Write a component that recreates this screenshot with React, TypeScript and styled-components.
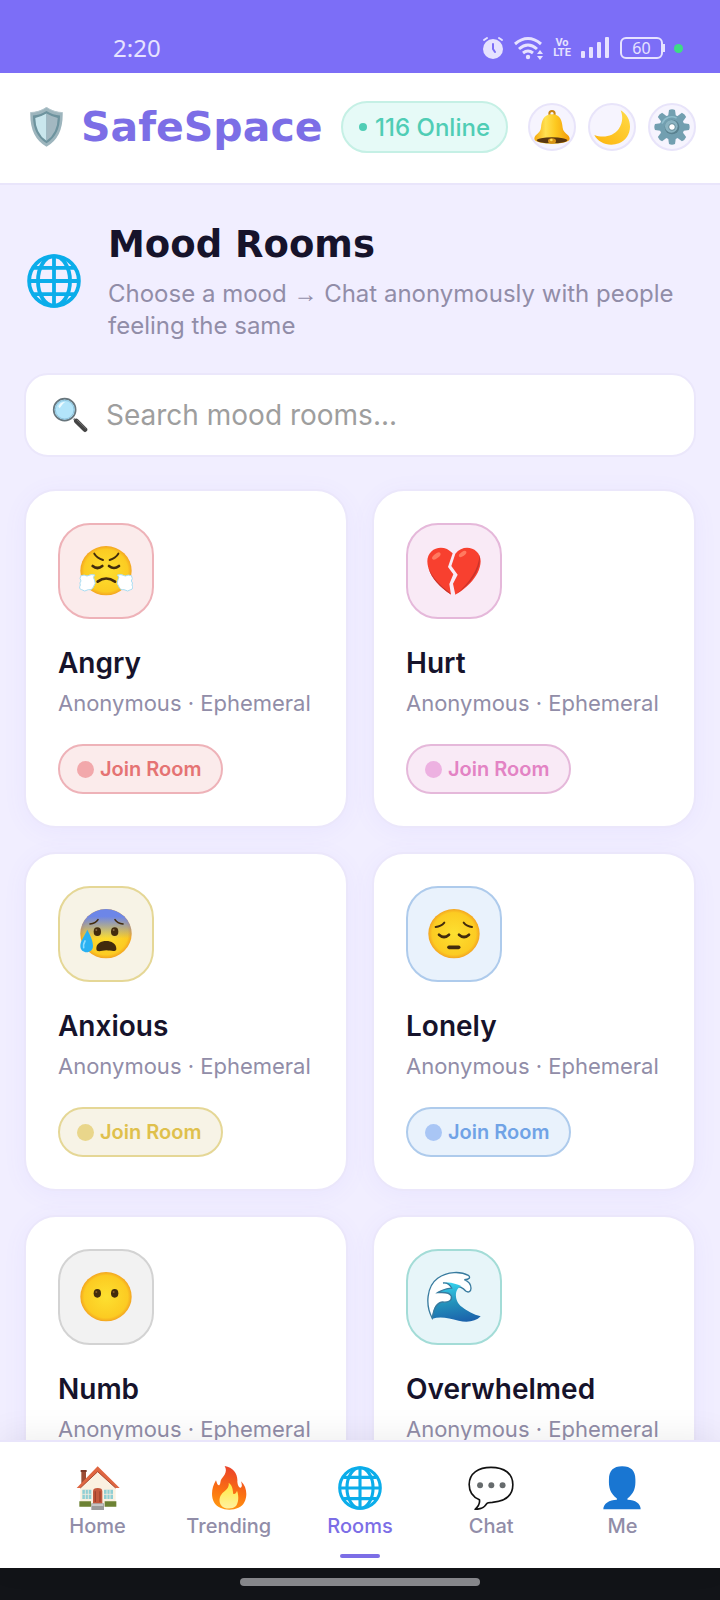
import React from "react";
import styled, { createGlobalStyle } from "styled-components";

const GlobalStyle = createGlobalStyle`
  * { box-sizing: border-box; }
  body { margin: 0; background: #f1eeff; font-family: Inter, "Noto Sans", sans-serif; color: #16132b; }
  h1, h2, p, ul { margin: 0; padding: 0; }
  button { font-family: inherit; cursor: pointer; }
`;

const Screen = styled.div`
  display: flex;
  flex-direction: column;
  height: 100vh;
  background: #f1eeff;
`;

const StatusBar = styled.div`
  display: flex;
  flex: none;
  align-items: flex-end;
  justify-content: space-between;
  height: 73px;
  padding: 0 37px 8px 113px;
  background: #7c6ef7;
  color: #e6e2ff;
`;

const Clock = styled.time`
  font: 400 24px/34px "Noto Sans", sans-serif;
`;

const StatusIcons = styled.div`
  display: flex;
  align-items: center;
  height: 34px;
`;

const SignalGroup = styled.span`
  display: flex;
  align-items: center;
  gap: 10px;
`;

const VoLte = styled.span`
  display: flex;
  flex-direction: column;
  align-items: center;
  width: 16px;
  margin: 0 11px 0 10px;
  font: 700 11px/10px Roboto, sans-serif;
`;

const Battery = styled.span`
  display: flex;
  align-items: center;
  justify-content: center;
  width: 43px;
  height: 22px;
  margin-left: 10px;
  border: 2px solid currentColor;
  border-radius: 6px;
  font: 400 16px/18px "Noto Sans", sans-serif;
`;

const BatteryTip = styled.span`
  width: 2px;
  height: 8px;
  background: currentColor;
`;

const ActiveDot = styled.span`
  width: 9px;
  height: 9px;
  margin-left: 9px;
  border-radius: 50%;
  background: #3ddc84;
`;

const Header = styled.header`
  display: flex;
  flex: none;
  align-items: center;
  height: 112px;
  padding: 0 24px 2px 30px;
  background: #fff;
  border-bottom: 2px solid #e9e5fb;
`;

const Brand = styled.div`
  display: flex;
  flex: 1;
  align-items: center;
  gap: 18px;
  font: 700 41px/48px "DejaVu Sans", sans-serif;
  color: #7c6ee6;
`;

const OnlinePill = styled.div`
  display: flex;
  align-items: center;
  gap: 8px;
  height: 52px;
  padding: 0 16px;
  border: 2px solid #c5f0e5;
  border-radius: 26px;
  background: #e6faf7;
  color: #4fcdb5;
  font-size: 24px;
  font-weight: 500;
`;

const OnlineDot = styled.span`
  width: 8px;
  height: 8px;
  border-radius: 50%;
  background: currentColor;
`;

const HeaderActions = styled.div`
  display: flex;
  gap: 12px;
  margin-left: 20px;
`;

const RoundButton = styled.button`
  display: flex;
  align-items: center;
  justify-content: center;
  width: 48px;
  height: 48px;
  padding: 0;
  border: 2px solid #e8e4fa;
  border-radius: 50%;
  background: #f6f4fe;
`;

const Content = styled.main`
  flex: 1;
  min-height: 0;
  overflow-y: auto;
  scrollbar-width: none;
  padding: 38px 24px 32px;
`;

const Intro = styled.section`
  display: flex;
  align-items: center;
  gap: 24px;
`;

const IntroIcon = styled.div`
  display: flex;
  flex: none;
  width: 60px;
  padding: 0 0 4px 3px;
`;

const PageTitle = styled.h1`
  font: 700 37px/44px "DejaVu Sans", sans-serif;
`;

const Subtitle = styled.p`
  margin-top: 11px;
  font-size: 24px;
  line-height: 32px;
  color: #918da8;
`;

const Arrow = styled.span`
  font-family: "Liberation Sans", sans-serif;
`;

const SearchBox = styled.label`
  display: flex;
  align-items: center;
  gap: 18px;
  height: 84px;
  margin: 31px 0 32px;
  padding: 0 26px;
  border: 2px solid #ebe7fb;
  border-radius: 24px;
  background: #fff;
`;

const SearchInput = styled.input`
  flex: 1;
  min-width: 0;
  padding: 0;
  border: 0;
  outline: 0;
  background: transparent;
  font: 400 28px/36px Inter, sans-serif;
  color: #16132b;
  &::placeholder { color: #9e9e9e; opacity: 1; }
`;

const RoomGrid = styled.div`
  display: grid;
  grid-template-columns: 1fr 1fr;
  gap: 24px;
`;

const Card = styled.article`
  display: flex;
  flex-direction: column;
  align-items: flex-start;
  padding: 32px;
  border: 2px solid #ebe7fb;
  border-radius: 32px;
  background: #fff;
  box-shadow: 0 4px 24px rgba(124, 110, 247, 0.06);
`;

const Tile = styled.div<{ $fill: string; $line: string }>`
  display: flex;
  align-items: center;
  justify-content: center;
  width: 96px;
  height: 96px;
  border: 2px solid ${(p) => p.$line};
  border-radius: 32px;
  background: ${(p) => p.$fill};
`;

const RoomName = styled.h2`
  margin-top: 24px;
  font-size: 28px;
  font-weight: 600;
  line-height: 40px;
`;

const RoomMeta = styled.p`
  margin-top: 6px;
  font-size: 22px;
  line-height: 28px;
  white-space: nowrap;
  color: #918da8;
`;

const JoinButton = styled.button<{ $fill: string; $line: string; $ink: string }>`
  display: flex;
  align-items: center;
  gap: 6px;
  height: 50px;
  margin-top: 27px;
  padding: 0 20px 0 17px;
  border: 2px solid ${(p) => p.$line};
  border-radius: 25px;
  background: ${(p) => p.$fill};
  color: ${(p) => p.$ink};
  font-size: 20px;
  font-weight: 600;
`;

const JoinDot = styled.span<{ $color: string }>`
  width: 17px;
  height: 17px;
  border-radius: 50%;
  background: ${(p) => p.$color};
`;

const NavBar = styled.nav`
  position: relative;
  display: flex;
  flex: none;
  height: 128px;
  padding: 0 32px;
  border-top: 2px solid #e9e5fb;
  background: #fff;
  box-shadow: 0 -4px 32px rgba(0, 0, 0, 0.07);
`;

const NavLink = styled.a<{ $active?: boolean }>`
  display: flex;
  flex: 1;
  flex-direction: column;
  align-items: center;
  padding-top: 24px;
  color: ${(p) => (p.$active ? "#7c6ee6" : "#918da8")};
  font-size: 20px;
  font-weight: 500;
  line-height: 28px;
  text-decoration: none;
  &::after {
    content: "";
    width: 40px;
    height: 4px;
    margin-top: 14px;
    border-radius: 2px;
    background: ${(p) => (p.$active ? "#7c6ee6" : "transparent")};
  }
`;

const NavIcon = styled.span`
  display: flex;
  height: 44px;
  margin-bottom: 2px;
`;

const GestureBar = styled.div`
  display: flex;
  flex: none;
  justify-content: center;
  height: 32px;
  padding-top: 10px;
  background: #121418;
`;

const GestureHandle = styled.div`
  width: 240px;
  height: 8px;
  border-radius: 4px;
  background: #87888c;
`;

/* ---------- drawings ---------- */

const Shield = () => (
  <svg width="33" height="40" viewBox="90 320 98 121" aria-hidden="true">
    <path d="M139 321 Q160 336 188 337 Q190 412 139 440 Q88 412 90 337 Q118 336 139 321Z" fill="#9db5bd" />
    <path d="M139 332 Q158 344 180 346 Q180 405 139 430 Q98 405 98 346 Q120 344 139 332Z" fill="#6d939e" />
    <path d="M139 340 Q120 351 105 353 Q106 400 139 422Z" fill="#c9e6ed" />
    <path d="M139 340 Q158 351 173 353 Q172 400 139 422Z" fill="#a3b8c1" />
    <path d="M90 337 Q118 336 139 321 Q160 336 188 337" fill="none" stroke="#b4c6cc" strokeWidth="3" />
  </svg>
);

const Bell = () => (
  <svg width="36" height="36" viewBox="583 328 108 108" aria-hidden="true">
    <defs>
      <linearGradient id="bell" x1="0" x2="1">
        <stop offset="0" stopColor="#f5a80f" />
        <stop offset=".32" stopColor="#ffe152" />
        <stop offset=".6" stopColor="#fdc920" />
        <stop offset="1" stopColor="#f39a0a" />
      </linearGradient>
    </defs>
    <circle cx="637" cy="342" r="8" fill="none" stroke="#c98412" strokeWidth="6" />
    <path d="M637 344 C663 344 667 364 669 384 C671 402 689 402 690 417 C690 437 584 437 584 417 C585 402 602 402 604 384 C606 364 611 344 637 344Z" fill="url(#bell)" />
    <ellipse cx="637" cy="422" rx="46" ry="9" fill="#5a3710" />
    <ellipse cx="637" cy="424" rx="12" ry="8" fill="#d89215" />
    <circle cx="635" cy="421" r="4" fill="#ffe05c" />
  </svg>
);

const Moon = () => (
  <svg width="36" height="36" viewBox="761 328 108 108" aria-hidden="true">
    <defs>
      <linearGradient id="moon" x1="1" y1="0" x2=".2" y2="1">
        <stop offset="0" stopColor="#ffdb48" />
        <stop offset="1" stopColor="#fdb813" />
      </linearGradient>
    </defs>
    <path d="M841 332 C882 356 876 416 836 431 C806 442 774 430 762 406 C788 416 820 410 835 388 C848 369 848 350 841 332Z" fill="url(#moon)" />
  </svg>
);

const Gear = () => (
  <svg width="36" height="36" viewBox="-54 -54 108 108" aria-hidden="true">
    {[0, 45, 90, 135, 180, 225, 270, 315].map((a) => (
      <path key={a} d="M-9 -51 Q0 -55 9 -51 L12 -30 L-12 -30Z" fill="#729fb0" transform={`rotate(${a})`} />
    ))}
    <circle r="37" fill="#729fb0" />
    <path d="M-29 -12 A31 31 0 0 1 12 -28" fill="none" stroke="#8ebccb" strokeWidth="5" strokeLinecap="round" />
    <circle r="22" fill="#59818f" />
    <circle r="19" cx="-2" cy="-2" fill="#8ab3c1" />
    <circle r="10" fill="#fff" stroke="#5f8997" strokeWidth="3" />
  </svg>
);

const Globe = ({ size }: { size: number }) => (
  <svg width={size} height={size} viewBox="0 0 128 128" aria-hidden="true">
    <g fill="none" stroke="#0badea" strokeWidth="9">
      <circle cx="64" cy="64" r="59" />
      <ellipse cx="64" cy="64" rx="38" ry="59" />
      <path d="M64 5V123M5 64H123M16 33H112M16 95H112" />
    </g>
  </svg>
);

const Magnifier = () => (
  <svg width="36" height="36" viewBox="157 594 108 108" aria-hidden="true">
    <path d="M222 659 L233 669" stroke="#9aa0a4" strokeWidth="7" />
    <path d="M230 666 L256 692" stroke="#454545" strokeWidth="14" strokeLinecap="round" />
    <path d="M233 664 L258 688" stroke="#707070" strokeWidth="3" strokeLinecap="round" />
    <circle cx="195" cy="632" r="33" fill="#b3e5fa" stroke="#67757c" strokeWidth="5" />
    <circle cx="195" cy="632" r="28" fill="none" stroke="#8fc4dc" strokeWidth="3" />
    <path d="M176 622 Q183 608 196 609 Q188 614 180 628Z" fill="#eefbff" />
  </svg>
);

const FaceBase = ({ id, top, children }: { id: string; top?: string; children: React.ReactNode }) => (
  <svg width="54" height="54" viewBox="-6 -6 162 162" aria-hidden="true">
    <defs>
      <radialGradient id={id} cx=".5" cy=".5" r=".52">
        <stop offset="0" stopColor="#fde030" />
        <stop offset=".82" stopColor="#fccb22" />
        <stop offset="1" stopColor="#f19a20" />
      </radialGradient>
      <linearGradient id={id + "-top"} x1="0" y1="0" x2="0" y2="1">
        <stop offset="0" stopColor={top} />
        <stop offset=".15" stopColor={top} />
        <stop offset=".6" stopColor={top} stopOpacity="0" />
      </linearGradient>
    </defs>
    <ellipse cx="75" cy="74" rx="77" ry="74" fill={`url(#${id})`} />
    {top && <ellipse cx="75" cy="74" rx="77" ry="74" fill={`url(#${id}-top)`} />}
    {children}
  </svg>
);

const cloud = "M-20 -22 Q-10 -26 -2 -21 Q12 -28 22 -24 Q14 -18 20 -10 Q26 2 18 10 Q14 22 2 20 Q-10 28 -18 20 Q-28 18 -22 6 Q-26 0 -20 -6 Q-26 -14 -20 -22Z";

const AngryFace = () => (
  <FaceBase id="angry">
    <g fill="none" stroke="#422b0d" strokeWidth="6" strokeLinecap="round">
      <path d="M40 23 Q48 36 66 42M112 23 Q104 36 86 42" />
      <path d="M35 60 Q49 72 64 60M84 60 Q99 72 114 60" strokeWidth="8" />
      <path d="M50 107 Q75 88 102 107" strokeWidth="8" />
    </g>
    <g fill="#fff" stroke="#a8dcf2" strokeWidth="3">
      <path d={cloud} transform="translate(20 111)" />
      <path d={cloud} transform="translate(131 111) scale(-1 1)" />
    </g>
  </FaceBase>
);

const AnxiousFace = () => (
  <FaceBase id="anxious" top="#6d86e8">
    <g fill="none" stroke="#422b0d" strokeWidth="5" strokeLinecap="round">
      <path d="M27 45 Q44 43 51 32M126 45 Q109 43 102 32" />
    </g>
    <ellipse cx="49" cy="68" rx="11" ry="13" fill="#422b0d" />
    <ellipse cx="101" cy="68" rx="11" ry="13" fill="#422b0d" />
    <circle cx="46" cy="63" r="3" fill="#8a6a45" />
    <circle cx="98" cy="63" r="3" fill="#8a6a45" />
    <path d="M46 119 C45 88 106 88 106 119 C106 129 95 126 76 124 C58 126 46 130 46 119Z" fill="#422b0d" />
    <path d="M19 62 C29 82 36 95 36 111 C36 136 -2 136 -2 111 C-2 95 10 82 19 62Z" fill="#29b1f2" />
    <path d="M12 96 Q6 106 8 116" fill="none" stroke="#8bdcff" strokeWidth="5" strokeLinecap="round" />
  </FaceBase>
);

const LonelyFace = () => (
  <FaceBase id="lonely">
    <g fill="none" stroke="#422b0d" strokeWidth="6" strokeLinecap="round">
      <path d="M20 54 Q36 53 46 41M129 54 Q114 53 104 41" />
      <path d="M30 77 Q45 91 60 77M90 77 Q105 91 120 77" strokeWidth="8" />
      <path d="M60 115 H89" strokeWidth="11" />
    </g>
  </FaceBase>
);

const NumbFace = () => (
  <FaceBase id="numb">
    <ellipse cx="49" cy="64" rx="11" ry="13" fill="#422b0d" />
    <ellipse cx="101" cy="64" rx="11" ry="13" fill="#422b0d" />
    <circle cx="46" cy="60" r="3" fill="#8a5a25" />
    <circle cx="98" cy="60" r="3" fill="#8a5a25" />
  </FaceBase>
);

const BrokenHeart = () => (
  <svg width="54" height="54" viewBox="201 190 162 162" aria-hidden="true">
    <g fill="#f8402f">
      <path d="M273 342 C250 325 203 290 202 242 C202 202 250 186 278 218 L264 259 L280 281 L268 310Z" />
      <path d="M286 342 C310 330 361 290 362 242 C362 202 312 186 286 219 L274 256 L293 282 L279 309Z" />
    </g>
    <path d="M359 222 C365 262 338 306 288 341 C329 305 355 268 359 222Z" fill="#c9332b" />
    <path d="M206 262 C214 294 240 320 272 341 L270 336 C242 316 218 292 206 262Z" fill="#c9332b" />
    <ellipse cx="229" cy="226" rx="15" ry="7" transform="rotate(-38 229 226)" fill="#ff7a60" />
    <ellipse cx="308" cy="220" rx="13" ry="6" transform="rotate(-35 308 220)" fill="#ff7a60" />
  </svg>
);

const Wave = () => (
  <svg width="54" height="54" viewBox="200 213 162 162" aria-hidden="true">
    <defs>
      <linearGradient id="wave" x1=".4" y1="0" x2=".6" y2="1">
        <stop offset="0" stopColor="#35d3ee" />
        <stop offset=".5" stopColor="#2391bb" />
        <stop offset="1" stopColor="#1b62ab" />
      </linearGradient>
    </defs>
    <path d="M216 358 C194 318 199 262 232 238 C262 216 302 217 324 229 C331 235 328 242 312 242 C324 247 332 258 332 268 C332 278 324 282 316 276 C306 264 292 261 278 262 L272 310 L228 322Z" fill="#fff" stroke="#387b9f" strokeWidth="4" />
    <path d="M216 359 C217 332 226 310 246 309 C264 311 276 305 273 292 C270 282 256 279 232 281 C246 271 262 269 274 267 C268 256 260 254 248 252 C266 247 286 253 304 262 C284 266 280 300 300 320 C318 335 340 347 361 352 C346 368 320 372 295 365 C265 357 240 351 216 359Z" fill="url(#wave)" />
    <path d="M248 252 C262 250 269 258 274 267 C262 269 246 271 232 281 C256 279 270 282 273 292 C276 305 264 311 246 309 C232 311 220 326 216 358" fill="none" stroke="#387b9f" strokeWidth="4" />
  </svg>
);

const House = () => (
  <svg width="44" height="44" viewBox="227 140 132 132" aria-hidden="true">
    <path d="M243 154 H257 V192 H243Z" fill="#9c4d36" />
    <path d="M241 152 H259 V158 H241Z" fill="#7c3a2a" />
    <path d="M240 200 L292 152 L346 200 V262 H240Z" fill="#faf1e1" />
    <path d="M237 246 H272 V262 H237ZM313 246 H348 V262 H313Z" fill="#6d8234" />
    <path d="M246 211 H273 V239 H246ZM311 211 H338 V239 H311Z" fill="#8fcfd4" />
    <path d="M255 211V239M264 211V239M246 225H273M320 211V239M329 211V239M311 225H338" stroke="#f5ecdd" strokeWidth="2.5" />
    <path d="M278 254 V216 Q278 206 292 206 Q306 206 306 216 V254Z" fill="#c4593d" />
    <path d="M285 216 V248M299 216 V248" stroke="#9f422c" strokeWidth="4" />
    <path d="M273 252 H311 V272 H273Z" fill="#9b9b9b" />
    <path d="M275 253 H309 V260 H275Z" fill="#c6c6c6" />
    <path d="M229 206 L292 141 L358 206 L346 206 L292 157 L240 206Z" fill="#df6641" />
    <path d="M240 206 L292 157 L346 206" fill="none" stroke="#aa482f" strokeWidth="3" />
  </svg>
);

const Fire = () => (
  <svg width="44" height="44" viewBox="619 138 132 132" aria-hidden="true">
    <defs>
      <linearGradient id="fire" x1=".6" y1="0" x2=".4" y2="1">
        <stop offset="0" stopColor="#e9402c" />
        <stop offset=".6" stopColor="#fb7212" />
        <stop offset="1" stopColor="#ff9812" />
      </linearGradient>
      <linearGradient id="flame" x1="0" y1="0" x2="0" y2="1">
        <stop offset="0" stopColor="#ffe93f" />
        <stop offset="1" stopColor="#fff1a0" />
      </linearGradient>
    </defs>
    <path d="M672 138 C698 142 712 162 710 185 C711 196 715 204 720 203 C726 199 723 191 721 184 C739 200 741 229 731 247 C718 276 656 277 640 247 C630 227 633 202 646 181 C649 191 651 197 656 196 C661 189 658 181 663 176 C674 163 680 153 672 138Z" fill="url(#fire)" />
    <path d="M684 188 C697 197 696 212 698 222 C704 224 707 217 709 212 C716 231 713 250 705 259 C693 270 668 267 660 254 C652 239 659 224 669 216 C679 208 686 200 684 188Z" fill="url(#flame)" />
  </svg>
);

const Chat = () => (
  <svg width="46" height="44" viewBox="443 139 138 133" aria-hidden="true">
    <path d="M512 143 C552 143 578 161 578 196 C578 233 550 246 516 249 C506 249 501 250 499 253 C493 264 479 270 464 270 C474 261 479 251 477 241 C455 232 446 219 446 195 C446 160 475 143 512 143Z" fill="#fff" stroke="#111" strokeWidth="5" strokeLinejoin="round" />
    <g fill="#666b6d"><circle cx="479" cy="197" r="9" /><circle cx="513" cy="197" r="9" /><circle cx="547" cy="197" r="9" /></g>
  </svg>
);

const Person = () => (
  <svg width="38" height="44" viewBox="849 138 115 133" aria-hidden="true">
    <path d="M907 139 C934 139 947 153 947 178 C948 203 944 220 923 236 V240 C947 241 963 251 963 269 H850 C850 251 868 241 891 240 V236 C870 220 866 203 867 178 C867 153 880 139 907 139Z" fill="#1976d2" />
  </svg>
);

const AlarmIcon = () => (
  <svg width="22" height="24" viewBox="0 0 22 24" fill="none" stroke="#e6e2ff" strokeLinecap="round" aria-hidden="true">
    <circle cx="11" cy="13" r="10" fill="#e6e2ff" stroke="none" />
    <path d="M2 4 L5 2M20 4 L17 2" strokeWidth="2" />
    <path d="M11 8 V13 L13 16" stroke="#7c6ef7" strokeWidth="2" />
  </svg>
);

const WifiIcon = () => (
  <svg width="30" height="24" viewBox="0 0 30 24" fill="none" stroke="#e6e2ff" strokeWidth="3" aria-hidden="true">
    <path d="M1 8 Q14 -3 27 8M5 13 Q14 5 23 13M9 17 Q14 13 19 17" />
    <circle cx="14" cy="21" r="2.2" fill="#e6e2ff" stroke="none" />
    <path d="M23 18 L26 14 L29 18ZM23 20 L26 24 L29 20Z" fill="#e6e2ff" stroke="none" />
  </svg>
);

const SignalIcon = () => (
  <svg width="29" height="22" viewBox="0 0 29 22" fill="#e6e2ff" aria-hidden="true">
    <rect x="0" y="14" width="4" height="7" rx="1" />
    <rect x="8" y="10" width="4" height="11" rx="1" />
    <rect x="16" y="5" width="4" height="16" rx="1" />
    <rect x="24" y="0" width="4" height="21" rx="1" />
  </svg>
);

/* ---------- page ---------- */

const rooms = [
  { name: "Angry", Icon: AngryFace, fill: "#fbebeb", line: "#eeb2b8", ink: "#e57373", dot: "#f2a8ab" },
  { name: "Hurt", Icon: BrokenHeart, fill: "#f9eaf6", line: "#e5b8da", ink: "#e383c4", dot: "#edb1e1" },
  { name: "Anxious", Icon: AnxiousFace, fill: "#f7f3e6", line: "#e5d796", ink: "#dfc04c", dot: "#e9d68b" },
  { name: "Lonely", Icon: LonelyFace, fill: "#e9f2fc", line: "#aecbec", ink: "#70a3e6", dot: "#a9c6f5" },
  { name: "Numb", Icon: NumbFace, fill: "#f2f2f2", line: "#d3d3d3", ink: "#9e9e9e", dot: "#c8c8c8" },
  { name: "Overwhelmed", Icon: Wave, fill: "#e7f5f9", line: "#a3dcd7", ink: "#4db6ac", dot: "#9adbd5" },
];

const tabs = [
  { label: "Home", icon: <House /> },
  { label: "Trending", icon: <Fire /> },
  { label: "Rooms", icon: <Globe size={44} />, active: true },
  { label: "Chat", icon: <Chat /> },
  { label: "Me", icon: <Person /> },
];

export default function App() {
  return (
    <Screen>
      <GlobalStyle />
      <StatusBar>
        <Clock>2:20</Clock>
        <StatusIcons>
          <SignalGroup>
            <AlarmIcon />
            <WifiIcon />
          </SignalGroup>
          <VoLte><span>Vo</span><span>LTE</span></VoLte>
          <SignalIcon />
          <Battery>60</Battery>
          <BatteryTip />
          <ActiveDot />
        </StatusIcons>
      </StatusBar>
      <Header>
        <Brand><Shield />SafeSpace</Brand>
        <OnlinePill><OnlineDot />116 Online</OnlinePill>
        <HeaderActions>
          <RoundButton aria-label="Notifications"><Bell /></RoundButton>
          <RoundButton aria-label="Dark mode"><Moon /></RoundButton>
          <RoundButton aria-label="Settings"><Gear /></RoundButton>
        </HeaderActions>
      </Header>
      <Content>
        <Intro>
          <IntroIcon><Globe size={54} /></IntroIcon>
          <div>
            <PageTitle>Mood Rooms</PageTitle>
            <Subtitle>Choose a mood <Arrow>→</Arrow> Chat anonymously with people feeling the same</Subtitle>
          </div>
        </Intro>
        <SearchBox>
          <Magnifier />
          <SearchInput type="search" aria-label="Search mood rooms" placeholder="Search mood rooms..." />
        </SearchBox>
        <RoomGrid>
          {rooms.map(({ name, Icon, fill, line, ink, dot }) => (
            <Card key={name}>
              <Tile $fill={fill} $line={line}><Icon /></Tile>
              <RoomName>{name}</RoomName>
              <RoomMeta>Anonymous · Ephemeral</RoomMeta>
              <JoinButton $fill={fill} $line={line} $ink={ink}>
                <JoinDot $color={dot} />Join Room
              </JoinButton>
            </Card>
          ))}
        </RoomGrid>
      </Content>
      <NavBar>
        {tabs.map((t) => (
          <NavLink key={t.label} href="#" $active={t.active} aria-current={t.active ? "page" : undefined}>
            <NavIcon>{t.icon}</NavIcon>
            {t.label}
          </NavLink>
        ))}
      </NavBar>
      <GestureBar><GestureHandle /></GestureBar>
    </Screen>
  );
}
